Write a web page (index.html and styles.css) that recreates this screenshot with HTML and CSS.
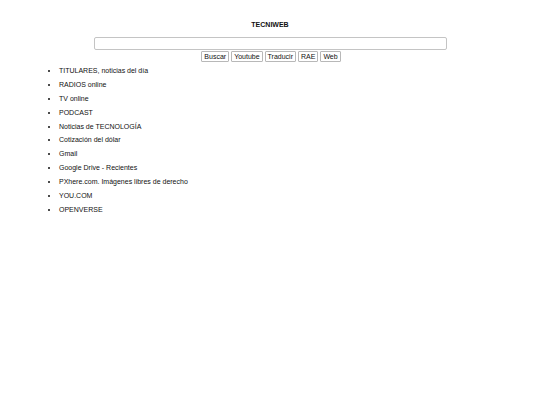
FILE: index.html
```html
<!DOCTYPE html>
<html lang="es">
<head>
<meta charset="utf-8">
<title>TECNIWEB</title>
<link rel="stylesheet" href="styles.css">
</head>
<body>
<div class="page">
  <h1 class="title">TECNIWEB</h1>
  <form class="search">
    <input class="query" type="text">
    <div class="buttons">
      <button type="button" class="btn">Buscar</button>
      <button type="button" class="btn">Youtube</button>
      <button type="button" class="btn">Traducir</button>
      <button type="button" class="btn">RAE</button>
      <button type="button" class="btn">Web</button>
    </div>
  </form>
  <ul class="links">
    <li>TITULARES, noticias del día</li>
    <li>RADIOS online</li>
    <li>TV online</li>
    <li>PODCAST</li>
    <li>Noticias de TECNOLOGÍA</li>
    <li>Cotización del dólar</li>
    <li>Gmail</li>
    <li>Google Drive - Recientes</li>
    <li>PXhere.com. Imágenes libres de derecho</li>
    <li>YOU.COM</li>
    <li>OPENVERSE</li>
  </ul>
</div>
</body>
</html>
```

FILE: styles.css
```css
html, body {
  margin: 0;
  padding: 0;
  background: #fff;
}
body {
  font-family: "Liberation Sans", Arial, sans-serif;
  font-size: 7px;
  color: #111;
}
.page {
  display: flex;
  flex-direction: column;
  padding-top: 21px;
}
.title {
  margin: 0;
  font-size: 7px;
  font-weight: bold;
  text-align: center;
  line-height: 8px;
}
.search {
  display: flex;
  flex-direction: column;
  align-items: center;
  margin-top: 8px;
}
.query {
  box-sizing: border-box;
  width: 353px;
  height: 13px;
  margin: 0;
  padding: 0 2px;
  border: 1px solid #c4c4c4;
  border-radius: 2px;
  background: #fff;
}
.buttons {
  display: flex;
  gap: 2px;
  margin-top: 1px;
  margin-left: 2px;
}
.btn {
  box-sizing: border-box;
  height: 11px;
  margin: 0;
  padding: 0 2px;
  font-family: "Liberation Sans", Arial, sans-serif;
  font-size: 7px;
  line-height: 9px;
  color: #111;
  background: #fff;
  border: 1px solid #b8b8b8;
  border-radius: 1px;
}
.links {
  margin: 5px 0 0;
  padding-left: 59px;
  list-style: disc;
}
.links li {
  line-height: 8px;
  margin-bottom: 5.9px;
}
```
